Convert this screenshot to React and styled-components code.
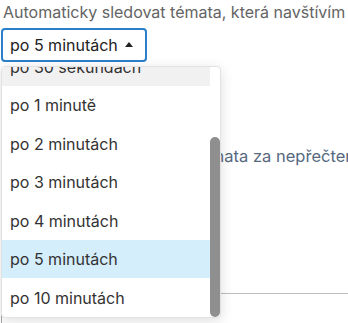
import React, { useLayoutEffect, useRef } from 'react'
import styled, { createGlobalStyle } from 'styled-components'

const Global = createGlobalStyle`
  html, body { margin: 0; padding: 0; background: #fff; }
  body { font-family: Inter, "Noto Sans", sans-serif; }
`

const OPTIONS = [
  'okamžitě',
  'po 10 sekundách',
  'po 30 sekundách',
  'po 1 minutě',
  'po 2 minutách',
  'po 3 minutách',
  'po 4 minutách',
  'po 5 minutách',
  'po 10 minutách',
]

const Page = styled.div`
  padding: 2px 0 0 1px;
  width: 347px;
  height: 321px;
  overflow: hidden;
`

const Label = styled.div`
  margin-left: 2px;
  font-size: 16px;
  line-height: 20px;
  color: #646464;
  white-space: nowrap;
`

const SelectWrap = styled.div`
  position: relative;
  margin-top: 6px;
`

const Select = styled.div`
  box-sizing: border-box;
  width: 146px;
  height: 34px;
  border: 2px solid #2b7fc9;
  border-radius: 4px;
  padding: 0 0 0 7px;
  display: flex;
  align-items: center;
  gap: 7px;
  font-size: 16px;
  color: #222;
`

const Caret = styled.span`
  width: 0;
  height: 0;
  border-left: 4.5px solid transparent;
  border-right: 4.5px solid transparent;
  border-bottom: 5px solid #222;
  margin-top: -1px;
`

const Menu = styled.div`
  position: absolute;
  top: 38px;
  left: 0;
  z-index: 5;
  box-sizing: border-box;
  width: 220px;
  height: 252px;
  border: 1px solid #e2e2e2;
  border-radius: 4px;
  background: #fff;
  box-shadow: 0 3px 14px rgba(0, 0, 0, 0.13);
  display: flex;
`

const Scroller = styled.div`
  flex: 1;
  overflow: hidden;
`

const Thumb = styled.div`
  position: absolute;
  right: 0;
  bottom: 0;
  width: 10px;
  height: 180px;
  border-radius: 5px;
  background: #8f8f8f;
`

const Item = styled.div`
  height: 38.5px;
  display: flex;
  align-items: center;
  padding: 1px 0 0 8px;
  box-sizing: border-box;
  margin-right: 10px;
  font-size: 16px;
  color: #333;
  white-space: nowrap;
  background: ${p => (p.$selected ? '#d4eefc' : p.$hover ? '#f1f1f1' : 'transparent')};
`

const Second = styled.div`
  margin-top: 84px;
  margin-left: 31px;
  font-size: 16.5px;
  line-height: 20px;
  color: #55697f;
  white-space: nowrap;
`

const Divider = styled.div`
  margin-top: 127px;
  border-top: 1px solid #bdbdbd;
`

const Panel = styled.div`
  margin-top: 14px;
  height: 40px;
  border-left: 1px solid #a8a8a8;
`

export default function App() {
  const scrollRef = useRef(null)
  useLayoutEffect(() => {
    if (scrollRef.current) scrollRef.current.scrollTop = scrollRef.current.scrollHeight
  }, [])

  return (
    <Page>
      <Global />
      <Label>Automaticky sledovat témata, která navštívím</Label>
      <SelectWrap>
        <Select>
          po 5 minutách <Caret />
        </Select>
        <Menu>
          <Scroller ref={scrollRef}>
            {OPTIONS.map(o => (
              <Item key={o} $selected={o === 'po 5 minutách'} $hover={o === 'po 30 sekundách'}>
                {o}
              </Item>
            ))}
          </Scroller>
          <Thumb />
        </Menu>
      </SelectWrap>
      <Second>Automaticky označit témata za nepřečtená</Second>
      <Divider />
      <Panel />
    </Page>
  )
}
